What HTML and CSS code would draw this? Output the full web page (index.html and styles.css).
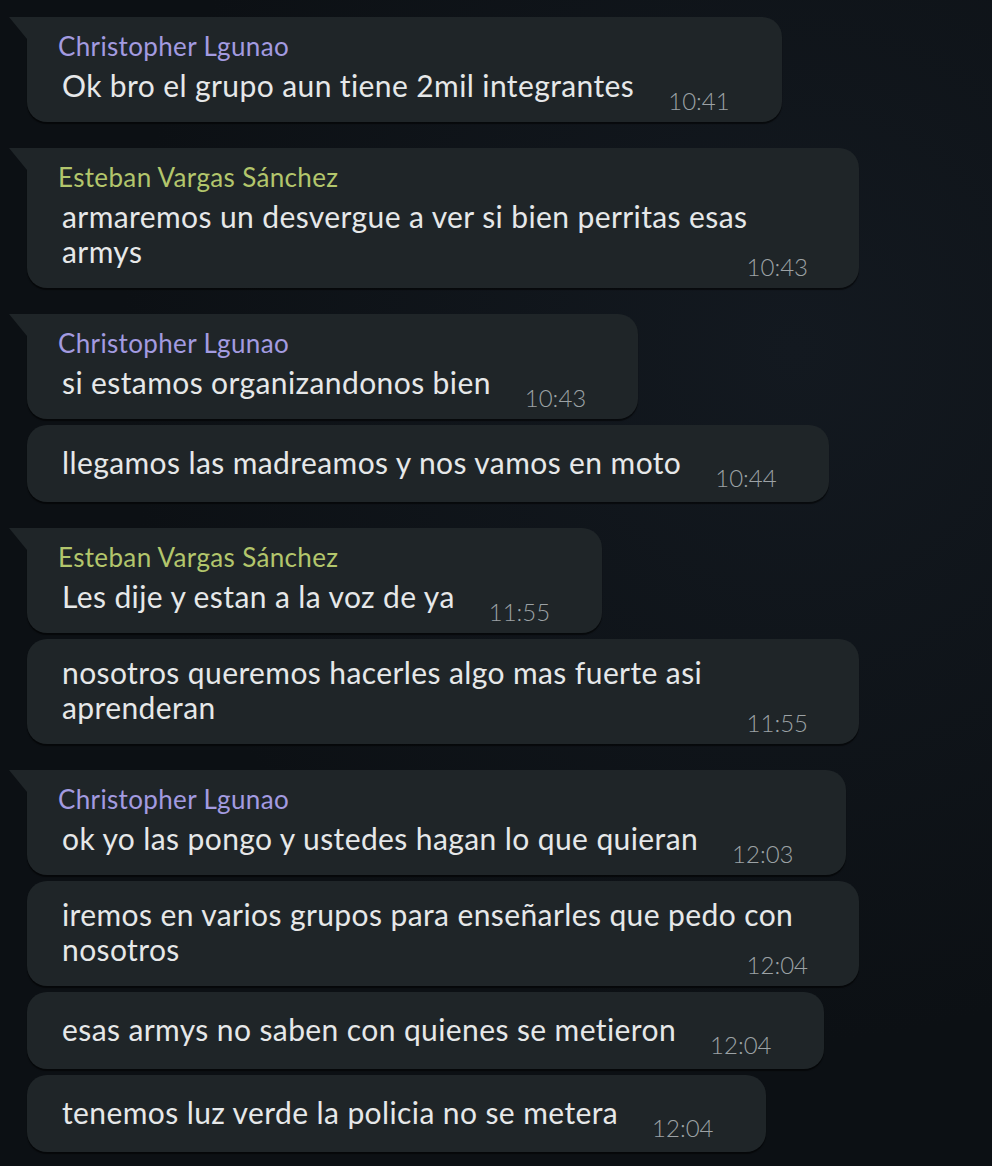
FILE: index.html
```html
<!DOCTYPE html>
<html lang="es">
<head>
<meta charset="utf-8">
<title>Chat</title>
<link rel="stylesheet" href="styles.css">
</head>
<body>
<div class="chat">
  <div class="group">
    <div class="bubble first">
      <div class="name purple">Christopher Lgunao</div>
      <div class="row"><span class="text">Ok bro el grupo aun tiene 2mil integrantes</span><span class="time">10:41</span></div>
    </div>
  </div>
  <div class="group">
    <div class="bubble first wide">
      <div class="name green">Esteban Vargas Sánchez</div>
      <div class="row"><span class="text">armaremos un desvergue a ver si bien perritas esas<br>armys</span><span class="time">10:43</span></div>
    </div>
  </div>
  <div class="group">
    <div class="bubble first">
      <div class="name purple">Christopher Lgunao</div>
      <div class="row"><span class="text">si estamos organizandonos bien</span><span class="time">10:43</span></div>
    </div>
    <div class="bubble solo">
      <div class="row"><span class="text">llegamos las madreamos y nos vamos en moto</span><span class="time">10:44</span></div>
    </div>
  </div>
  <div class="group">
    <div class="bubble first">
      <div class="name green">Esteban Vargas Sánchez</div>
      <div class="row"><span class="text">Les dije y estan a la voz de ya</span><span class="time">11:55</span></div>
    </div>
    <div class="bubble wide">
      <div class="row"><span class="text">nosotros queremos hacerles algo mas fuerte asi<br>aprenderan</span><span class="time">11:55</span></div>
    </div>
  </div>
  <div class="group">
    <div class="bubble first">
      <div class="name purple">Christopher Lgunao</div>
      <div class="row"><span class="text">ok yo las pongo y ustedes hagan lo que quieran</span><span class="time">12:03</span></div>
    </div>
    <div class="bubble wide">
      <div class="row"><span class="text">iremos en varios grupos para enseñarles que pedo con<br>nosotros</span><span class="time">12:04</span></div>
    </div>
    <div class="bubble solo">
      <div class="row"><span class="text">esas armys no saben con quienes se metieron</span><span class="time">12:04</span></div>
    </div>
    <div class="bubble solo">
      <div class="row"><span class="text">tenemos luz verde la policia no se metera</span><span class="time">12:04</span></div>
    </div>
  </div>
</div>
</body>
</html>
```

FILE: styles.css
```css
html, body {
  margin: 0;
  padding: 0;
}
body {
  background: #0c1014;
  background-image: radial-gradient(ellipse at 80% 30%, #131920 0%, #0c1014 60%);
  min-height: 1166px;
  font-family: Lato, "Open Sans", sans-serif;
  font-variant-ligatures: none;
  color: #e6e8e9;
}
.chat {
  display: flex;
  flex-direction: column;
  gap: 26px;
  padding: 17px 0 0 27px;
}
.group {
  display: flex;
  flex-direction: column;
  align-items: flex-start;
  gap: 6px;
}
.bubble {
  position: relative;
  background: #1f2528;
  border-radius: 20px;
  padding: 16px 52px 6px 35px;
  box-shadow: 0 2px 1px rgba(0, 0, 0, 0.55);
  box-sizing: border-box;
}
.bubble.solo {
  padding-top: 20px;
  padding-bottom: 9px;
}
.bubble.first {
  border-top-left-radius: 0;
}
.bubble.first::before {
  content: "";
  position: absolute;
  top: 0;
  left: -18px;
  width: 18px;
  height: 22px;
  background: #1f2528;
  clip-path: polygon(0 0, 100% 0, 100% 100%, 8% 8%);
}
.bubble.wide {
  width: 832px;
  padding-right: 51px;
}
.bubble.wide .text {
  flex: 1 1 0;
  min-width: 0;
}
.name {
  font-size: 26px;
  line-height: 26px;
  letter-spacing: 0.35px;
  margin: 0 0 9px -4px;
}
.purple { color: #a39be0; }
.green { color: #b3c66c; }
.row {
  display: flex;
  align-items: flex-end;
  gap: 34px;
}
.text {
  font-size: 30px;
  line-height: 35px;
  letter-spacing: 0.4px;
  padding-bottom: 13px;
  flex: 1 1 auto;
  white-space: nowrap;
}
.time {
  font-size: 24px;
  line-height: 30px;
  color: #9ca2a5;
  font-weight: 300;
  flex: none;
}
```
